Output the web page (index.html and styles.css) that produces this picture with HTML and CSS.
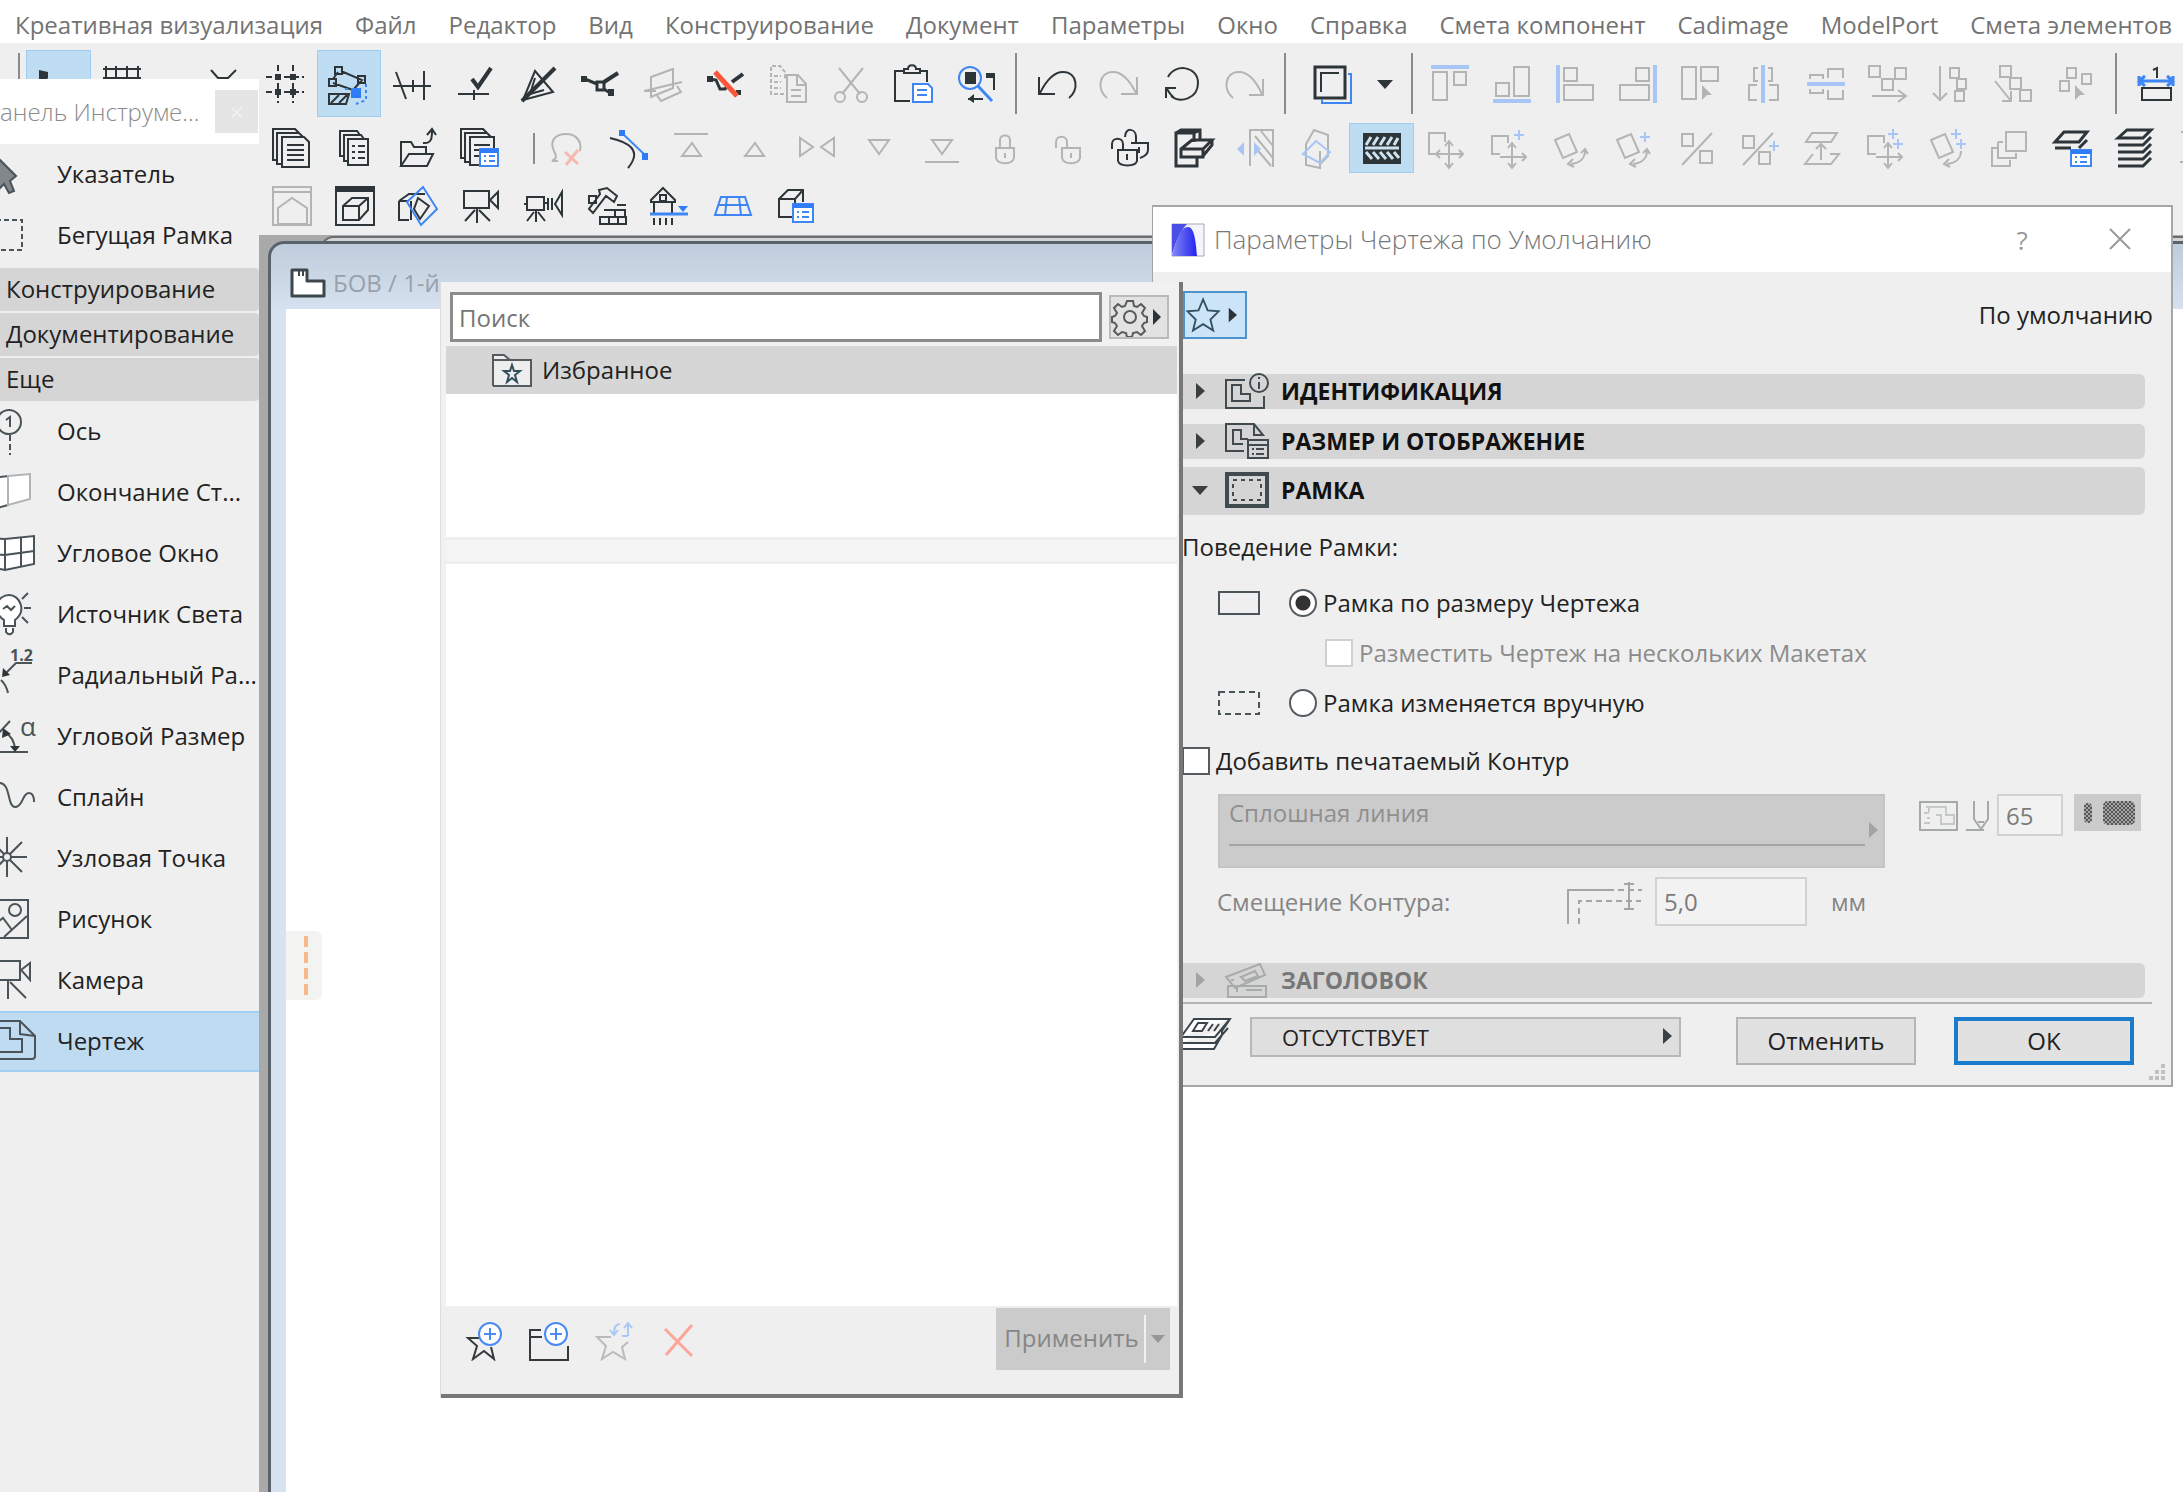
FILE: index.html
```html
<!DOCTYPE html>
<html lang="ru">
<head>
<meta charset="utf-8">
<title>Параметры Чертежа по Умолчанию</title>
<link rel="stylesheet" href="styles.css">
</head>
<body>
<nav class="menubar">
  <a href="#">Креативная визуализация</a>
  <a href="#">Файл</a>
  <a href="#">Редактор</a>
  <a href="#">Вид</a>
  <a href="#">Конструирование</a>
  <a href="#">Документ</a>
  <a href="#">Параметры</a>
  <a href="#">Окно</a>
  <a href="#">Справка</a>
  <a href="#">Смета компонент</a>
  <a href="#">Cadimage</a>
  <a href="#">ModelPort</a>
  <a href="#">Смета элементов</a>
</nav>

<header class="toolbars">
  <div class="bar bar-main">
    <span class="sep sep-thin"></span>
    <button class="tool on" aria-label="Выбор"><svg class="ic" viewBox="0 0 40 40"><path class="f" d="M1 6l9 2v6l-4 4-5 2z"/></svg></button>
    <button class="tool" aria-label="Сетка"><svg class="ic" viewBox="0 0 40 40"><path d="M1 5h38M1 14h38M4 2v30M14 2v30M25 2v30M36 2v30"/></svg></button>
    <span class="spacer"></span>
    <button class="tool" aria-label="Ось"><svg class="ic" viewBox="0 0 40 40"><path d="M8 6l7 8h10l8-8"/></svg></button>
    <button class="tool" aria-label="Шаговая сетка"><svg class="ic" viewBox="0 0 40 40"><path stroke-dasharray="6 3" d="M1 13h38M1 28h38M13 1v38M28 1v38"/><path class="f" d="M10 10h6v6h-6zM25 10h6v6h-6zM10 25h6v6h-6zM25 25h6v6h-6z"/></svg></button>
    <button class="tool on" aria-label="Направляющие"><svg class="ic" viewBox="0 0 40 40"><path d="M4 15L9 8M4 19l20 7 9-10L12 7M6 3h7v7H6zM0 15h7v7H0zM29 12h7v7h-7zM0 30h20l-3 10H0zM2 39l8-8M10 39l8-8"/><path class="bf" d="M22 24h10v10H22z"/><path class="b" stroke-dasharray="3 3" d="M37 20v16l-10 4M16 25h18"/></svg></button>
    <button class="tool" aria-label="Привязка"><svg class="ic" viewBox="0 0 40 40"><path d="M4 8l10 27M1 22h38M21 16v12M32 7v29"/></svg></button>
    <button class="tool" aria-label="Проверка"><svg class="ic" viewBox="0 0 40 40"><path stroke-width="4" d="M17 15l6 8L36 4"/><path d="M3 30h31M19 26v10"/></svg></button>
    <button class="tool" aria-label="Угольник"><svg class="ic" viewBox="0 0 40 40"><path stroke-width="4" d="M37 4L4 37"/><path d="M17 7L5 36l30-8zM17 14l-5 16 14-4"/></svg></button>
    <button class="tool" aria-label="Узлы"><svg class="ic" viewBox="0 0 40 40"><path stroke-width="3" d="M5 15l12 5M17 18h7v8h-7zM24 25l6 4"/><path stroke-width="4" d="M24 18l14-9"/><path class="f" d="M1 12h6v6H1zM28 25h6v7h-6z"/></svg></button>
    <button class="tool off" aria-label="Плоскость"><svg class="ic" viewBox="0 0 40 40"><path d="M8 13l22-8v19L8 33zM1 27l38-9M1 27h12M13 30l5 7 20-9-4-6"/></svg></button>
    <button class="tool" aria-label="Удалить узел"><svg class="ic" viewBox="0 0 40 40"><path stroke-width="3" d="M4 15l6 1 4 9h5l3-4"/><path stroke-width="4" d="M26 18l11-8"/><path class="f" d="M1 12h6v6H1zM30 26h5v5h-5z"/><path class="r" stroke-width="5" d="M9 8l22 24"/></svg></button>
    <button class="tool off" aria-label="Копировать"><svg class="ic" viewBox="0 0 40 40"><path stroke-dasharray="4 2" d="M16 30H3V2h9l5 6v8M6 12h7M6 18h7M6 24h7"/><path d="M19 11h11l8 9v18H19zM29 11v10h9M23 26h10M23 32h10"/></svg></button>
    <button class="tool off" aria-label="Вырезать"><svg class="ic" viewBox="0 0 40 40"><path d="M8 4l21 26M32 4L11 30"/><circle cx="9" cy="33" r="5"/><circle cx="31" cy="33" r="5"/></svg></button>
    <button class="tool" aria-label="Вставить"><svg class="ic" viewBox="0 0 40 40"><path d="M17 37H2V7h9M27 7h7v11M11 9V5h4c0-5 8-5 8 0h4v4z"/><path class="b" fill="#fff" d="M20 20h15l4 4v14H20zM24 26h10M24 31h10"/></svg></button>
    <button class="tool" aria-label="Найти и выбрать"><svg class="ic" viewBox="0 0 40 40"><circle class="b" cx="14" cy="14" r="11"/><path class="b" stroke-width="3" d="M22 22l14 15"/><path class="f" d="M9 8h11v12H9zM30 9h8v5h-8zM12 35l6-5v9z"/><path d="M38 9v17M12 35h15"/></svg></button>
    <span class="sep"></span>
    <button class="tool" aria-label="Отменить действие"><svg class="ic" viewBox="0 0 40 40"><path d="M2 13v17h16M3 29C9 17 17 8 26 8c15 0 16 19 6 26"/></svg></button>
    <button class="tool off" aria-label="Вернуть действие"><svg class="ic" viewBox="0 0 40 40"><path d="M38 13v17H22M37 29C31 17 23 8 14 8-1 8-2 27 8 34"/></svg></button>
    <button class="tool" aria-label="Повторить"><svg class="ic" viewBox="0 0 40 40"><path d="M9 32c10 8 27 2 27-13C36 2 13-1 6 13M4 34V24h10M5 25c2 4 4 6 7 9"/></svg></button>
    <button class="tool off" aria-label="Повторить последнее"><svg class="ic" viewBox="0 0 40 40"><path d="M38 15v16H24M37 30C31 17 23 8 14 8-1 8-2 27 8 34"/></svg></button>
    <span class="sep sep-wide"></span>
    <button class="tool" aria-label="Группа"><svg class="ic" viewBox="0 0 40 40"><path stroke-width="3" d="M2 3h30v31H2z"/><path d="M8 28V9h18"/><path class="b" d="M35 10h3v29H9v-4"/></svg></button>
    <button class="drop" aria-label="Список групп"><svg class="ic" viewBox="0 0 40 40"><path class="f" d="M12 16h16l-8 9z"/></svg></button>
    <span class="sep sep-thin"></span>
    <button class="tool off" aria-label="По верху"><svg class="ic" viewBox="0 0 40 40"><path class="b" stroke-width="4" d="M1 3h38"/><path d="M3 8h14v28H3zM24 8h12v13H24z"/></svg></button>
    <button class="tool off" aria-label="По низу"><svg class="ic" viewBox="0 0 40 40"><path class="b" stroke-width="4" d="M1 37h38"/><path d="M4 19h13v13H4zM22 3h15v29H22z"/></svg></button>
    <button class="tool off" aria-label="По левому краю"><svg class="ic" viewBox="0 0 40 40"><path class="b" stroke-width="4" d="M3 1v38"/><path d="M9 4h13v13H9zM9 21h29v15H9z"/></svg></button>
    <button class="tool off" aria-label="По правому краю"><svg class="ic" viewBox="0 0 40 40"><path class="b" stroke-width="4" d="M37 1v38"/><path d="M18 4h13v13H18zM2 21h29v15H2z"/></svg></button>
    <button class="tool off" aria-label="Особое выравнивание"><svg class="ic" viewBox="0 0 40 40"><path d="M2 3h14v32H2zM21 3h17v14H21z"/><path class="f" d="M22 21l10 10h-5l-5 5z"/></svg></button>
    <button class="tool off" aria-label="Центр по вертикали"><svg class="ic" viewBox="0 0 40 40"><path class="b" stroke-width="4" d="M20 1v38"/><path d="M15 4h-4v13h4M25 4h4v13h-4M14 21H6v15h8M26 21h9v15h-9"/></svg></button>
    <button class="tool off" aria-label="Центр по горизонтали"><svg class="ic" viewBox="0 0 40 40"><path class="b" stroke-width="4" d="M1 20h38"/><path d="M4 15v-4h13v4M4 25v4h13v-4M22 14V5h15v9M22 26v9h15v-9"/></svg></button>
    <button class="tool off" aria-label="Распределить по X"><svg class="ic" viewBox="0 0 40 40"><path d="M1 2h11v11H1zM27 4h11v11H27zM14 15h11v11H14zM4 32h33M30 26l8 6-8 6"/></svg></button>
    <button class="tool off" aria-label="Распределить по Y"><svg class="ic" viewBox="0 0 40 40"><path d="M9 2v34M2 29l7 7 7-7M19 4h9v10h-9zM26 15h9v10h-9zM24 27h9v10h-9z"/></svg></button>
    <button class="tool off" aria-label="Распределить по линии"><svg class="ic" viewBox="0 0 40 40"><path d="M7 2h11v11H7zM17 14h11v11H17zM27 26h11v11H27zM2 17l16 20M9 37h9V27"/></svg></button>
    <button class="tool off" aria-label="Особое распределение"><svg class="ic" viewBox="0 0 40 40"><path d="M11 4h9v10h-9zM4 17h9v10H4zM26 10h9v10h-9z"/><path class="f" d="M19 21l10 10h-5l-5 5z"/></svg></button>
    <span class="sep"></span>
    <button class="tool" aria-label="Размеры"><svg class="ic" viewBox="0 0 40 40"><path d="M5 24h29v12H5zM16 6l4-2v10"/><path class="b" stroke-width="3" d="M1 17h36M2 12v10M36 12v10M8 12l-6 5 6 5M30 12l6 5-6 5"/></svg></button>
  </div>

  <div class="bar bar-second">
    <button class="tool" aria-label="Каталог"><svg class="ic" viewBox="0 0 40 40"><path d="M6 32H2V1h22l4 4M10 36H6V5h22l4 4M11 9h22l5 5v25H11zM16 17h17M16 22h17M16 27h17M16 32h17"/></svg></button>
    <button class="tool" aria-label="Ведомость"><svg class="ic" viewBox="0 0 40 40"><path d="M9 28H6V3h17l3 4M14 33h-4V7h17l3 4M14 11h20v26H14zM18 18h3M24 18h7M18 24h3M24 24h7M18 30h3M24 30h7"/></svg></button>
    <button class="tool" aria-label="Открыть"><svg class="ic" viewBox="0 0 40 40"><path d="M4 38V14h10l3 5h12v8M4 38l8-12h24l-6 12zM26 15c9 1 9-6 9-12M30 7l5-6 4 6"/></svg></button>
    <button class="tool" aria-label="Настройки каталога"><svg class="ic" viewBox="0 0 40 40"><path d="M6 30H2V1h22l4 4M10 34H6V5h22l4 4M20 37h-9V9h24v12M15 17h16M15 22h10M15 28h5"/><path class="b" fill="#fff" d="M21 21h18v17H21zM25 28h2M30 28h6M25 33h2M30 33h6"/><path class="bf" d="M21 21h18v4H21z"/></svg></button>
    <span class="sep sep-short"></span>
    <button class="tool off" aria-label="Удалить выноску"><svg class="ic" viewBox="0 0 40 40"><path d="M12 33H6c6-3 4-6 2-10C3 12 10 6 20 6s16 7 14 17"/><path class="r" stroke-width="3" d="M19 24l13 12M32 22L20 37"/></svg></button>
    <button class="tool" aria-label="Касательная"><svg class="ic" viewBox="0 0 40 40"><path d="M1 10c18 4 33 12 18 30"/><path class="b" d="M13 5l24 23"/><path class="bf" d="M10 2h6v6h-6zM33 25h6v7h-6z"/></svg></button>
    <button class="tool off" aria-label="На передний план"><svg class="ic" viewBox="0 0 40 40"><path d="M3 6h34M11 28l10-13 9 13z"/></svg></button>
    <button class="tool off" aria-label="Вперед"><svg class="ic" viewBox="0 0 40 40"><path d="M11 28l10-13 9 13z"/></svg></button>
    <button class="tool off" aria-label="Исходный порядок"><svg class="ic" viewBox="0 0 40 40"><path d="M3 10v18l13-9zM37 10v18l-13-9z"/></svg></button>
    <button class="tool off" aria-label="Назад"><svg class="ic" viewBox="0 0 40 40"><path d="M10 12h20L20 26z"/></svg></button>
    <button class="tool off" aria-label="На задний план"><svg class="ic" viewBox="0 0 40 40"><path d="M3 34h34M10 12h20L20 26z"/></svg></button>
    <button class="tool off" aria-label="Запереть"><svg class="ic" viewBox="0 0 40 40"><path d="M11 20h18v10c-2 7-16 7-18 0zM15 20v-8c0-6 10-6 10 0v8M20 25v5"/></svg></button>
    <button class="tool off" aria-label="Отпереть"><svg class="ic" viewBox="0 0 40 40"><path d="M15 20h18v10c-2 7-16 7-18 0zM9 20v-6c0-7 11-7 11 0v6M24 25v5"/></svg></button>
    <button class="tool" aria-label="Отпереть все"><svg class="ic" viewBox="0 0 40 40"><path d="M8 22h19v11c-2 6-17 6-19 0zM2 21v-5c0-7 11-7 11 0v6M17 26v6M30 30c6-2 8-5 8-8v-7H21M15 9c0-10 11-9 11 0v6M29 19v6"/></svg></button>
    <button class="tool" aria-label="Ворота"><svg class="ic" viewBox="0 0 40 40"><path stroke-width="3" d="M24 30v8H3V5h18v9M3 5l5-3h19v9M21 5l6-3M8 21l11-9h20l-9 9v8H8zM8 21h22M30 28l9-11v-5"/></svg></button>
    <button class="tool off" aria-label="Смещение стены"><svg class="ic" viewBox="0 0 40 40"><path d="M15 38V2h23v37M15 2v36M20 8l18 22M20 19l16 19M26 3l12 15"/><path class="bf" d="M2 21l7-7v14zM26 21l-7-7v14z"/></svg></button>
    <button class="tool off" aria-label="Объем"><svg class="ic" viewBox="0 0 40 40"><path d="M8 16l8-14 14 5v8M8 16v21l14 3V23M22 36l8-8V8"/><path class="b" d="M5 26l13-13 14 11-10 11z"/></svg></button>
    <button class="tool on" aria-label="Штриховка"><svg class="ic" viewBox="0 0 40 40"><path class="f" d="M1 5h38v31H1z"/><path class="w" d="M3 20h34M4 17l5-8M11 17l5-8M18 17l5-8M25 17l5-8M32 17l4-7M4 24l6 7M11 24l6 7M18 24l6 7M25 24l6 7M32 24l5 6"/></svg></button>
    <button class="tool off" aria-label="Переместить"><svg class="ic" viewBox="0 0 40 40"><path d="M12 26H4V5h16v9M24 14v26M12 26h26M20 18l4-5 4 5M20 35l4 5 4-5M15 22l-4 4 4 4M34 22l4 4-4 4"/></svg></button>
    <button class="tool off" aria-label="Переместить копию"><svg class="ic" viewBox="0 0 40 40"><path d="M12 26H4V8h16v7M24 17v23M12 29h26M20 20l4-5 4 5M20 35l4 5 4-5M34 25l4 4-4 4"/><path class="b" d="M31 2v10M26 7h10"/></svg></button>
    <button class="tool off" aria-label="Повернуть"><svg class="ic" viewBox="0 0 40 40"><path d="M4 12l14-6 8 18-14 6zM20 36c9-1 14-6 14-13M22 31l-5 5 6 3M30 25l4-4 3 5"/></svg></button>
    <button class="tool off" aria-label="Повернуть копию"><svg class="ic" viewBox="0 0 40 40"><path d="M4 12l14-6 8 18-14 6zM20 36c9-1 14-6 14-13M22 31l-5 5 6 3M30 25l4-4 3 5"/><path class="b" d="M32 4v10M27 9h10"/></svg></button>
    <button class="tool off" aria-label="Отразить"><svg class="ic" viewBox="0 0 40 40"><path d="M6 6h11v12H6zM36 5L6 37M24 23h12v12H24z"/></svg></button>
    <button class="tool off" aria-label="Отразить копию"><svg class="ic" viewBox="0 0 40 40"><path d="M4 8h11v12H4zM34 5L4 37M20 24h11v12H20z"/><path class="b" d="M35 13v10M30 18h10"/></svg></button>
    <button class="tool off" aria-label="Возвысить"><svg class="ic" viewBox="0 0 40 40"><path d="M11 5h25l-6 9H5zM12 26l-8 10h26l8-10h-9M20 32V16M15 21l5-5 5 5"/></svg></button>
    <button class="tool off" aria-label="Размножить"><svg class="ic" viewBox="0 0 40 40"><path d="M12 26H4V8h16v7M24 17v23M12 29h26M20 20l4-5 4 5M20 35l4 5 4-5M34 25l4 4-4 4"/><path class="b" d="M29 1v10M24 6h10M34 11v10M29 16h10"/></svg></button>
    <button class="tool off" aria-label="Повернуть копии"><svg class="ic" viewBox="0 0 40 40"><path d="M4 12l14-6 8 18-14 6zM20 36c9-1 14-6 14-13M22 31l-5 5 6 3"/><path class="b" d="M29 1v10M24 6h10M34 11v10M29 16h10"/></svg></button>
    <button class="tool off" aria-label="Изменить размер"><svg class="ic" viewBox="0 0 40 40"><path d="M17 4h20v19H17zM9 14h5M9 14v16h18v-5M9 20H3v18h18v-6"/></svg></button>
    <button class="tool" aria-label="Параметры слоев"><svg class="ic" viewBox="0 0 40 40"><path stroke-width="3" d="M3 14L12 4h23l-8 10zM3 20h16M27 20l8-8"/><path class="b" fill="#fff" d="M19 22h20v16H19zM23 29h2M28 29h7M23 34h2M28 34h7"/><path class="bf" d="M19 22h20v4H19z"/></svg></button>
    <button class="tool" aria-label="Слои"><svg class="ic" viewBox="0 0 40 40"><path stroke-width="3" d="M3 10l9-8h24l-8 8zM3 17h25l8-8M3 24h25l8-8M3 31h25l8-8M3 38h25l8-8"/></svg></button>
    <button class="tool off" aria-label="Уровень"><svg class="ic" viewBox="0 0 40 40"><path d="M4 4h30M8 4v30M3 34h30"/></svg></button>
  </div>

  <div class="bar bar-third">
    <button class="tool off" aria-label="Перспектива"><svg class="ic" viewBox="0 0 40 40"><path d="M1 1h38v38H1zM1 6h38M6 38V22l14-10 15 10v16z"/></svg></button>
    <button class="tool" aria-label="3D окно"><svg class="ic" viewBox="0 0 40 40"><path d="M1 1h38v38H1zM8 20l9-8h16v12l-9 10H8zM8 20h16v14M24 20l9-8"/><path class="f" d="M1 1h38v5H1z"/></svg></button>
    <button class="tool" aria-label="Сечение"><svg class="ic" viewBox="0 0 40 40"><path d="M1 15l10-7h16M1 15v19h10M1 15h9M13 15v19M20 12l11 8-9 13-6-10z"/><path class="b" d="M25 1l14 22-16 16L9 16z"/></svg></button>
    <button class="tool" aria-label="Камера"><svg class="ic" viewBox="0 0 40 40"><path d="M3 5h25v17H3zM29 14l8-8v16zM16 22v15M14 24L4 35M18 24l11 11"/></svg></button>
    <button class="tool" aria-label="Облет"><svg class="ic" viewBox="0 0 40 40"><path d="M3 11h17v13H3zM0 18h4M20 17h4M24 12v12M28 12v12M31 18l7-12v23zM12 24v12M10 26l-7 9M14 26l7 9"/></svg></button>
    <button class="tool" aria-label="Разборка"><svg class="ic" viewBox="0 0 40 40"><path d="M2 10h7v7H2zM12 4l8-2 10 8-3 6-8-6-13 17-4-4 11-15zM13 31h26v7H13zM17 24h21v7M22 31v7M31 31v7M28 24v7M30 19h9"/></svg></button>
    <button class="tool" aria-label="Фасад"><svg class="ic" viewBox="0 0 40 40"><path d="M1 14L13 2l12 12v2H1zM4 16v12M22 16v12M10 9h6v6h-6zM4 32v7M10 32v7M16 32v7M22 32v7"/><path class="b" stroke-width="3" d="M0 28h38"/><path class="bf" d="M28 20h10l-5 6z"/></svg></button>
    <button class="tool" aria-label="Плоскость редактирования"><svg class="ic" viewBox="0 0 40 40"><path class="b" d="M8 11h24l6 18H2zM14 11l-2 18M26 11l2 18M5 19h30"/></svg></button>
    <button class="tool" aria-label="Параметры 3D"><svg class="ic" viewBox="0 0 40 40"><path d="M16 31H3V13h16v6M3 13l9-9h15v12M19 13l8-9"/><path class="b" fill="#fff" d="M17 18h20v18H17zM21 26h2M26 26h7M21 31h2M26 31h7"/><path class="bf" d="M17 18h20v4H17z"/></svg></button>
  </div>
</header>

<main class="workspace">
  <div class="doc-back"></div>
  <section class="doc">
    <div class="doc-title">
      <svg class="doc-icon" viewBox="0 0 36 30"><path fill="#fff" stroke="#3d464d" stroke-width="3" stroke-linejoin="round" d="M2 2h15v11h17v15H2z"/><path fill="none" stroke="#3d464d" stroke-width="2" d="M9 3v5M13 3v5"/></svg>
      <span>БОВ / 1-й</span>
    </div>
    <div class="doc-canvas"><div class="dock-tab"><i></i><i></i><i></i><i></i></div></div>
  </section>
</main>

<aside class="toolbox">
  <div class="toolbox-title"><span>анель Инструме...</span><button aria-label="Закрыть панель">×</button></div>
  <ul class="tools">
    <li><button><svg class="ti" viewBox="0 0 48 48"><path fill="#81878b" d="M8 2l24 24-6 5 4 10-5 2-5-9-6 6z"/></svg>Указатель</button></li>
    <li><button><svg class="ti" viewBox="0 0 48 48"><path stroke-dasharray="5 3" d="M4 9h34v30H4z"/></svg>Бегущая Рамка</button></li>
  </ul>
  <button class="group">Конструирование</button>
  <button class="group">Документирование</button>
  <button class="group">Еще</button>
  <ul class="tools">
    <li><button><svg class="ti" viewBox="0 0 48 48"><circle cx="25" cy="15" r="12"/><path d="M22 13l4-3v10"/><path stroke-dasharray="6 3" d="M26 28v20"/></svg>Ось</button></li>
    <li><button><svg class="ti" viewBox="0 0 48 48"><path fill="#fff" d="M6 10l18-2v29L6 42z"/><path fill="#fff" stroke="#b0b4b6" d="M24 8l22-2v25l-22 6z"/></svg>Окончание Ст...</button></li>
    <li><button><svg class="ti" viewBox="0 0 48 48"><path fill="#fff" d="M6 9l15 1 29-3v28l-29 6-15-3zM21 10v31M37 8v29M6 25l15 1 29-4"/></svg>Угловое Окно</button></li>
    <li><button><svg class="ti" viewBox="0 0 48 48"><path fill="#fff" d="M20 36v-6C6 20 14 5 25 5s18 16 6 25v6zM22 38v4c2 3 5 3 7 0v-4M19 19l4-3 4 4 4-4M38 9l6-6M40 18h7M38 27l6 6"/></svg>Источник Света</button></li>
    <li><button><svg class="ti" viewBox="0 0 48 48"><path d="M20 24L32 12h16M17 29c4 4 6 8 7 13"/><path class="f" d="M18 26l1-9 7 7z"/><text x="26" y="10">1.2</text></svg>Радиальный Ра...</button></li>
    <li><button><svg class="ti" viewBox="0 0 48 48"><path d="M10 40h34M14 22L26 9M20 20c7 4 10 8 11 17"/><path class="f" d="M18 26l1-10 8 6zM26 34h10l-5 6z"/><text class="alpha" x="36" y="24">α</text></svg>Угловой Размер</button></li>
    <li><button><svg class="ti" viewBox="0 0 48 48"><path d="M14 10c14-2 8 25 18 24 8-2 6-14 13-14 4 0 5 4 5 9"/></svg>Сплайн</button></li>
    <li><button><svg class="ti" viewBox="0 0 48 48"><circle cx="23" cy="23" r="4"/><path d="M23 3v16M23 27v16M27 23h16M19 23H8M26 20l12-12M26 26l12 12M20 20L10 10M20 26L10 36"/></svg>Узловая Точка</button></li>
    <li><button><svg class="ti" viewBox="0 0 48 48"><path d="M6 5h38v38H6zM6 33l13-10 9 12M20 42l23-21"/><circle cx="31" cy="15" r="6"/></svg>Рисунок</button></li>
    <li><button><svg class="ti" viewBox="0 0 48 48"><path d="M4 5h32v19H4zM37 14l9-7v17zM24 24v19M26 26l16 16"/></svg>Камера</button></li>
    <li><button class="current"><svg class="ti" viewBox="0 0 48 48"><path d="M4 4h32l15 15v20c0 2-1 3-3 3H4zM36 4v13l15 2M14 11h12v11h12v13H14z"/></svg>Чертеж</button></li>
  </ul>
</aside>

<section class="dialog" role="dialog" aria-labelledby="dlg-title">
  <div class="dialog-title">
    <svg class="logo" viewBox="0 0 34 34"><defs><linearGradient id="lg" x1="0" y1="0" x2="1" y2="0"><stop offset="0" stop-color="#8488f5"/><stop offset="1" stop-color="#2222ee"/></linearGradient></defs><path fill="#f4f5fb" stroke="#a8a8b4" d="M1 1h32v32H1z"/><path fill="#4a4ee6" d="M1 1h15C8 9 5 20 1 31z"/><path fill="url(#lg)" d="M1 33C6 16 9 4 17 4c7 0 8 18 9 29z"/></svg>
    <h1 id="dlg-title">Параметры Чертежа по Умолчанию</h1>
    <button class="win-btn" aria-label="Справка">?</button>
    <button class="win-btn" aria-label="Закрыть"><svg viewBox="0 0 22 22"><path fill="none" stroke="#999" stroke-width="2" d="M1 1l20 20M21 1L1 21"/></svg></button>
  </div>
  <div class="dialog-body">
    <div class="fav-row">
      <button class="fav" aria-label="Избранное"><svg viewBox="0 0 64 48"><path fill="none" stroke="#33505f" stroke-width="2" d="M19 7l5 12 12 1-9 9 3 12-11-7-11 7 3-12-9-9 12-1z"/><path fill="#2b3338" d="M47 16l9 8-9 8z"/></svg></button>
      <span>По умолчанию</span>
    </div>
    <button class="section" aria-expanded="false"><svg class="tri" viewBox="0 0 16 16"><path d="M4 0l9 8-9 8z"/></svg><svg class="si" viewBox="0 0 44 36"><path d="M20 7H1v28h38V23M7 12h9v9h9v7H7z"/><circle cx="34" cy="10" r="9"/><path d="M34 4v2M34 9v7"/></svg>ИДЕНТИФИКАЦИЯ</button>
    <button class="section" aria-expanded="false"><svg class="tri" viewBox="0 0 16 16"><path d="M4 0l9 8-9 8z"/></svg><svg class="si" viewBox="0 0 44 36"><path d="M19 28H1V1h28l9 11h-9V1M18 21H8V7h8v9h7M23 17h20v18H23zM23 22h20M27 26h2M31 26h8M27 31h2M31 31h8"/></svg>РАЗМЕР И ОТОБРАЖЕНИЕ</button>
    <button class="section open" aria-expanded="true"><svg class="tri" viewBox="0 0 16 16"><path d="M0 4h16l-8 9z"/></svg><svg class="si" viewBox="0 0 44 36"><path stroke-width="4" d="M2 2h40v32H2z"/><path stroke-dasharray="4 4" d="M8 8h28v20H8z"/></svg>РАМКА</button>

    <p class="caption">Поведение Рамки:</p>
    <div class="opt">
      <svg class="frame" viewBox="0 0 42 24"><path d="M1 1h40v22H1z"/></svg>
      <input type="radio" name="frame" id="fit" checked><label for="fit">Рамка по размеру Чертежа</label>
    </div>
    <div class="opt nested">
      <input type="checkbox" id="multi" disabled><label for="multi">Разместить Чертеж на нескольких Макетах</label>
    </div>
    <div class="opt">
      <svg class="frame" viewBox="0 0 42 24"><path stroke-dasharray="6 4" d="M1 1h40v22H1z"/></svg>
      <input type="radio" name="frame" id="manual"><label for="manual">Рамка изменяется вручную</label>
    </div>
    <div class="opt outline">
      <input type="checkbox" id="outline"><label for="outline">Добавить печатаемый Контур</label>
    </div>

    <div class="line-row">
      <div class="line-select">
        <select aria-label="Тип линии" disabled><option>Сплошная линия</option></select>
        <svg class="tri" viewBox="0 0 16 16"><path d="M4 0l9 8-9 8z"/></svg>
      </div>
      <svg class="pen" viewBox="0 0 72 34"><path stroke="#a5a9a9" d="M2 4h37v28H2z"/><path d="M6 15h5M9 20h3M6 25h6M8 9h20v8h8v9H23v-9h-5M11 9v5"/><path stroke="#a5a9a9" d="M56 3v18l7 10 7-10V3M60 24h6M48 32h18"/></svg>
      <input class="pen-no" type="text" aria-label="Номер пера" value="65" disabled>
      <button class="swatch" aria-label="Цвет пера" disabled><i class="knob"></i><i class="fill"></i></button>
    </div>
    <div class="offset-row">
      <label for="offset">Смещение Контура:</label>
      <svg class="offset-icon" viewBox="0 0 76 44"><path d="M2 44V10h46M63 2v28M58 4h10M58 29h10"/><path stroke-dasharray="6 4" d="M52 10h24M13 44V21h62"/></svg>
      <input type="text" id="offset" value="5,0" disabled>
      <span>мм</span>
    </div>
    <button class="section muted" aria-expanded="false"><svg class="tri" viewBox="0 0 16 16"><path d="M4 0l9 8-9 8z"/></svg><svg class="si" viewBox="0 0 44 36"><path d="M1 15L35 2l5 11L10 26zM16 15l14-6 3 5-13 5zM6 18h3M3 24h38v11H3zM12 23v7M21 28h16"/></svg>ЗАГОЛОВОК</button>
  </div>
  <div class="dialog-foot">
    <svg class="stack" viewBox="0 0 56 34"><path fill="#fff" stroke="#3b464c" stroke-width="2" d="M4 20L17 2h36l-8 12v4l-8 14H4zM4 20h34L53 2M4 26h34l13-15M21 6h9l-5 8h-9zM36 7l-5 7M42 7l-5 7"/></svg>
    <div class="layer-select">
      <select aria-label="Слой"><option>ОТСУТСТВУЕТ</option></select>
      <svg class="tri" viewBox="0 0 16 16"><path d="M4 0l9 8-9 8z"/></svg>
    </div>
    <button class="push">Отменить</button>
    <button class="push primary">OK</button>
    <svg class="grip" viewBox="0 0 18 18"><path d="M13 1h4v4h-4zM7 7h4v4H7zM13 7h4v4h-4zM1 13h4v4H1zM7 13h4v4H7zM13 13h4v4h-4z"/></svg>
  </div>
</section>

<section class="popup">
  <div class="search-row">
    <input type="search" placeholder="Поиск" aria-label="Поиск">
    <button class="gear" aria-label="Настройки"><svg viewBox="0 0 56 40"><g fill="none" stroke="#565b5e" stroke-width="2"><circle cx="19" cy="20" r="6"/><path d="M16 4h6l1 5 3 1 4-3 4 4-3 5 2 3 3 1v5l-3 1-2 3 3 5-4 4-4-3-4 1-1 4h-5l-1-4-4-1-4 3-4-4 3-5-2-3-3-1v-5l3-1 2-3-3-5 4-4 4 3 3-1z"/></g><path fill="#2b3338" d="M42 12l8 8-8 8z"/></svg></button>
  </div>
  <ul class="fav-tree">
    <li><svg viewBox="0 0 40 34"><path fill="#eee" stroke="#555c60" stroke-width="2" d="M1 33V2h11l6 5h21v26H1M1 7h17"/><path fill="none" stroke="#33505f" stroke-width="2" d="M20 12l2 6h6l-5 4 2 7-5-4-5 4 2-7-5-4h6z"/></svg>Избранное</li>
  </ul>
  <div class="splitter"></div>
  <div class="preview"></div>
  <div class="popup-foot">
    <button aria-label="Новое избранное"><svg viewBox="0 0 40 40"><path fill="none" stroke="#33393d" stroke-width="2" d="M16 17H4l9 8-4 13 11-8 10 8-3-12"/><circle cx="26" cy="13" r="11" fill="#fff" stroke="#4a8af4" stroke-width="2"/><path stroke="#4a8af4" stroke-width="2" d="M20 13h12M26 7v12"/></svg></button>
    <button aria-label="Новая папка"><svg viewBox="0 0 40 40"><path fill="none" stroke="#33393d" stroke-width="2" d="M12 9H1v30h38V25M1 16h12"/><circle cx="27" cy="13" r="11" fill="#fff" stroke="#4a8af4" stroke-width="2"/><path stroke="#4a8af4" stroke-width="2" d="M21 13h12M27 7v12"/></svg></button>
    <button aria-label="Переопределить" disabled><svg viewBox="0 0 40 40"><path fill="none" stroke="#b9bbbc" stroke-width="2" d="M17 16H3l9 9-4 13 11-7 12 7-3-12 6-5"/><path fill="none" stroke="#a9c8f7" stroke-width="2" d="M26 3c-5 0-6 4-6 10M16 9l4 5 4-5M34 3v12M30 7l4-5 4 5M28 15h6"/></svg></button>
    <button aria-label="Удалить" disabled><svg viewBox="0 0 40 40"><path fill="none" stroke="#fba698" stroke-width="3" d="M6 8l27 27M33 4L7 34"/></svg></button>
    <button class="apply" disabled><span>Применить</span><svg viewBox="0 0 16 16"><path fill="#969696" d="M1 4h14l-7 8z"/></svg></button>
  </div>
</section>
</body>
</html>
```
FILE: styles.css
```css
* { box-sizing: border-box; }

body {
  margin: 0;
  height: 100vh;
  display: flex;
  flex-direction: column;
  overflow: hidden;
  position: relative;
  background: #efefef;
  color: #222;
  font: 24px/30px "Open Sans", "Noto Sans", sans-serif;
}

button, input, select { font: inherit; color: inherit; margin: 0; }
button { padding: 0; border: 0; background: none; }
ul { list-style: none; margin: 0; padding: 0; }

/* Menu */
.menubar {
  display: flex;
  gap: 32px;
  height: 43px;
  padding: 9px 0 0 15px;
  background: #fff;
  overflow: hidden;
  white-space: nowrap;
}
.menubar a { color: #737373; text-decoration: none; line-height: 32px; }

/* Toolbars */
.toolbars { height: 192px; padding-top: 7px; flex: none; }
.bar { display: flex; align-items: center; }
.bar-main { height: 67px; padding-left: 12px; margin-right: -5px; }
.bar-second { height: 50px; margin: 6px -46px 0 0; padding-left: 260px; }
.bar-third { height: 50px; margin-top: 8px; padding-left: 260px; }
.tool {
  flex: 1 1 0;
  min-width: 0;
  align-self: stretch;
  display: flex;
  align-items: center;
  justify-content: center;
}
.bar-third .tool { flex: 0 0 63px; }
.tool.on { background: #bedcf2; border: 1px solid #9fcdf0; }
.drop { width: 40px; display: flex; justify-content: flex-end; }
.spacer { width: 38px; }
.sep { flex: 0 0 18px; height: 61px; display: flex; justify-content: center; }
.sep::before { content: ""; width: 2px; background: #8b8b8b; }
.sep-thin { flex-basis: 14px; }
.sep-wide { flex-basis: 26px; padding-right: 8px; }
.sep-short { flex-basis: 24px; height: 31px; justify-content: flex-end; }
.ic {
  width: 40px;
  height: 40px;
  overflow: visible;
  fill: none;
  stroke: #2d3539;
  stroke-width: 2;
}
.f { fill: #2d3539; stroke: none; }
.b { stroke: #3f86f5; }
.bf { fill: #2f7cf6; stroke: none; }
.r { stroke: #f8573a; }
.w { stroke: #cfe2f0; stroke-width: 3; }
.off .ic { stroke: #b3b5b5; }
.off .f { fill: #b3b5b5; }
.off .b { stroke: #a8c6f5; }
.off .bf { fill: #a8c6f5; }
.off .r { stroke: #f7b9af; }

/* Document windows */
.workspace {
  flex: 1;
  margin-left: 259px;
  padding: 6px 0 0 9px;
  background: #a9a9a9;
  display: flex;
  position: relative;
}
.doc-back {
  position: absolute;
  inset: 1px -4px auto 62px;
  height: 20px;
  border: 2px solid #6a6e72;
  border-radius: 12px 0 0 0;
  background: #d2d4d6;
}
.doc {
  flex: 1;
  margin-right: -4px;
  position: relative;
  display: flex;
  flex-direction: column;
  border: 3px solid #5a626b;
  border-bottom: 0;
  border-radius: 16px 0 0 0;
  background: linear-gradient(#bfccdb, #d7e3f0 70px);
  padding-left: 15px;
}
.doc-title {
  height: 65px;
  display: flex;
  align-items: center;
  gap: 7px;
  padding: 12px 0 0 4px;
  color: #98a1ab;
}
.doc-icon { width: 36px; height: 30px; }
.doc-canvas { flex: 1; background: #fff; padding-top: 622px; }
.dock-tab {
  width: 36px;
  height: 69px;
  padding-left: 3px;
  border-radius: 0 6px 6px 0;
  background: #f3f3f2;
  display: flex;
  flex-direction: column;
  align-items: center;
  justify-content: center;
  gap: 5px;
}
.dock-tab i { width: 4px; height: 11px; background: #f8b98a; }

/* Toolbox palette */
.toolbox {
  position: absolute;
  left: 0;
  top: 79px;
  bottom: 0;
  width: 259px;
  background: #efefef;
}
.toolbox-title {
  height: 65px;
  display: flex;
  align-items: center;
  justify-content: space-between;
  padding-right: 1px;
  background: #fff;
  color: #8a8a8a;
  font-weight: 300;
  white-space: nowrap;
}
.toolbox-title button { flex: none; width: 43px; height: 43px; background: #e5e5e5; color: #f6f6f6; }
.tools button {
  width: calc(100% + 16px);
  height: 61px;
  display: flex;
  align-items: center;
  gap: 25px;
  margin-left: -16px;
  padding-bottom: 2px;
  text-align: left;
  white-space: nowrap;
}
.tools .current { background: #bedbf2; border: 2px solid #a2cff2; border-width: 2px 0; }
.ti {
  flex: none;
  width: 48px;
  height: 48px;
  overflow: visible;
  fill: none;
  stroke: #4a5357;
  stroke-width: 2;
}
.ti text { fill: #4a5357; stroke: none; font-size: 16px; font-weight: 700; }
.ti .alpha { font-size: 26px; font-weight: 400; }
.group {
  display: block;
  width: 100%;
  height: 43px;
  margin-top: 2px;
  padding: 0 0 2px 6px;
  border-radius: 0 4px 4px 0;
  background: #d5d5d5;
  text-align: left;
}

/* Dialog */
.dialog {
  position: absolute;
  left: 1152px;
  top: 205px;
  width: 1021px;
  border: 2px solid #a6a6a6;
  border-left-width: 1px;
  background: #efefef;
}
.dialog-title {
  height: 65px;
  display: flex;
  align-items: center;
  padding: 0 18px;
  background: #fff;
}
.logo { width: 34px; height: 34px; margin-right: 9px; }
.dialog-title h1 { flex: 1; margin: 0; padding-bottom: 2px; font-size: 26px; font-weight: 300; color: #777; }
.win-btn { width: 66px; height: 44px; color: #999; font-size: 26px; }
.win-btn + .win-btn { margin-left: 32px; }
.win-btn svg { width: 22px; height: 22px; }
.dialog-body { padding: 19px 26px 0 24px; }
.fav-row { display: flex; justify-content: space-between; align-items: center; margin: 0 -8px 35px 6px; }
.fav { width: 64px; height: 48px; border: 2px solid #4a93cf; background: #cbe4f8; }
.fav svg { display: block; width: 60px; height: 44px; }
.section {
  width: 100%;
  height: 35px;
  display: flex;
  align-items: center;
  margin-bottom: 15px;
  padding: 0 0 2px 15px;
  border-radius: 6px;
  background: #d5d5d5;
  color: #111;
  font-size: 23px;
  font-weight: 700;
}
.section:nth-of-type(2) { margin-bottom: 8px; }
.section.open { height: 48px; margin-bottom: 0; }
.section.muted { margin: 37px 0 0; color: #777; }
.tri { width: 16px; height: 16px; fill: #3a3f42; }
.si {
  width: 44px;
  height: 36px;
  margin: 0 12px 0 17px;
  fill: none;
  stroke: #414a4f;
  stroke-width: 2;
}
.muted .tri, .line-select .tri { fill: #a3a3a3; }
.muted .si { stroke: #a8abab; }
.caption { margin: 16px 0 15px 5px; line-height: 32px; }
.opt { height: 50px; display: flex; align-items: center; margin-left: 41px; }
.opt.nested { margin-left: 148px; color: #8b8b8b; }
.opt.outline { margin: 8px 0 8px 5px; }
.frame { width: 42px; height: 24px; margin-right: 29px; fill: none; stroke: #4a5459; stroke-width: 2; }
.opt input { appearance: none; width: 28px; height: 28px; margin-right: 6px; border: 2px solid #555b5e; background: #fff; }
.opt input[type="radio"] { border-radius: 50%; }
.opt input:checked { background: radial-gradient(circle, #333 0 7px, #fff 8px); }
.opt input:disabled { border-color: #d0d0d0; }
.line-row { display: flex; align-items: flex-start; margin-left: 41px; }
.line-select { position: relative; flex: 1; }
.line-select select {
  appearance: none;
  display: block;
  width: 100%;
  height: 74px;
  padding: 0 9px 36px;
  border: 2px solid #c4c4c4;
  border-radius: 0;
  background: #cbcbcb;
  color: #8f8f8f;
  opacity: 1;
}
.line-select::after {
  content: "";
  position: absolute;
  left: 11px;
  right: 20px;
  top: 50px;
  height: 2px;
  background: #a4a4a4;
}
.line-select .tri { position: absolute; right: 4px; top: 28px; }
.pen { width: 72px; height: 34px; margin: 4px 7px 0 33px; fill: none; stroke: #c3cac8; stroke-width: 2; }
.pen-no, #offset {
  width: 66px;
  height: 42px;
  padding: 0 7px;
  border: 2px solid #d2d2d2;
  background: #f2f2f2;
  color: #7b7b7b;
}
.swatch {
  width: 67px;
  height: 37px;
  margin: 0 4px 0 11px;
  display: flex;
  align-items: center;
  justify-content: space-between;
  padding: 0 6px 0 10px;
  background: #cbcbcb;
}
.swatch i { height: 24px; background: repeating-conic-gradient(#555 0 25%, #a6a6a6 0 50%) 0 0 / 4px 4px; }
.swatch .knob { width: 8px; height: 20px; border-radius: 4px; }
.swatch .fill { width: 32px; border-radius: 5px; }
.offset-row { display: flex; align-items: center; margin: 9px 0 0 40px; color: #858585; }
.offset-row label { width: 349px; }
.offset-icon { width: 76px; height: 44px; margin-right: 13px; fill: none; stroke: #a2a5a5; stroke-width: 2; }
#offset { width: 152px; height: 49px; margin-right: 24px; }
.dialog-foot {
  position: relative;
  display: flex;
  align-items: flex-start;
  margin: 4px 19px 0 24px;
  padding: 13px 18px 20px 0;
  border-top: 2px solid #b5b5b5;
}
.stack { width: 56px; height: 34px; margin-right: 17px; }
.layer-select { position: relative; width: 431px; margin-right: 55px; }
.layer-select select {
  appearance: none;
  display: block;
  width: 100%;
  height: 40px;
  padding: 0 30px;
  border: 2px solid #b8b8b8;
  border-radius: 0;
  background: #dfdfdf;
  font-size: 22px;
}
.layer-select .tri { position: absolute; right: 6px; top: 11px; }
.push { width: 180px; height: 48px; border: 2px solid #b5b5b5; background: #e1e1e1; }
.primary { margin-left: auto; border: 4px solid #1a7ccb; }
.grip { position: absolute; right: -14px; bottom: 4px; width: 18px; height: 18px; fill: #c0c0c0; }

/* Favourites popup */
.popup {
  position: absolute;
  left: 441px;
  top: 282px;
  width: 742px;
  height: 1116px;
  display: flex;
  flex-direction: column;
  border: solid #777;
  border-width: 0 4px 4px 0;
  background: #f1f1f1;
  box-shadow: -1px 0 #ddd;
}
.search-row { display: flex; align-items: center; gap: 7px; padding: 10px 10px 4px 9px; }
.search-row input {
  flex: 1;
  height: 50px;
  padding: 0 6px;
  border: 3px solid #8c8c8c;
  border-radius: 0;
  background: #fff;
  appearance: none;
}
.search-row input::placeholder { color: #757575; opacity: 1; }
.gear { width: 60px; height: 44px; border: 2px solid #bababa; background: #e2e2e2; }
.gear svg { display: block; width: 56px; height: 40px; }
.fav-tree { height: 191px; margin: 0 2px 0 5px; background: #fff; }
.fav-tree li { height: 48px; display: flex; align-items: center; gap: 10px; padding-left: 46px; background: #d6d6d6; }
.fav-tree svg { width: 40px; height: 34px; }
.splitter { height: 27px; margin: 0 2px 0 5px; background: #f5f5f5; border: solid #eee; border-width: 3px 0; }
.preview { flex: 1; margin: 0 2px 0 5px; background: #fff; }
.popup-foot { height: 88px; display: flex; padding: 2px 9px 0 23px; gap: 25px; background: #efefef; }
.popup-foot button { height: 66px; }
.popup-foot svg { display: block; width: 40px; height: 40px; }
.popup-foot .apply {
  width: 174px;
  height: 62px;
  margin-left: auto;
  display: flex;
  align-items: center;
  background: #cbcbcb;
  color: #868686;
}
.apply span { flex: 1; padding: 0 5px 2px 8px; line-height: 46px; border-right: 2px solid #f1f1f1; }
.popup-foot .apply svg { width: 16px; height: 16px; margin: 0 4px; }
```
